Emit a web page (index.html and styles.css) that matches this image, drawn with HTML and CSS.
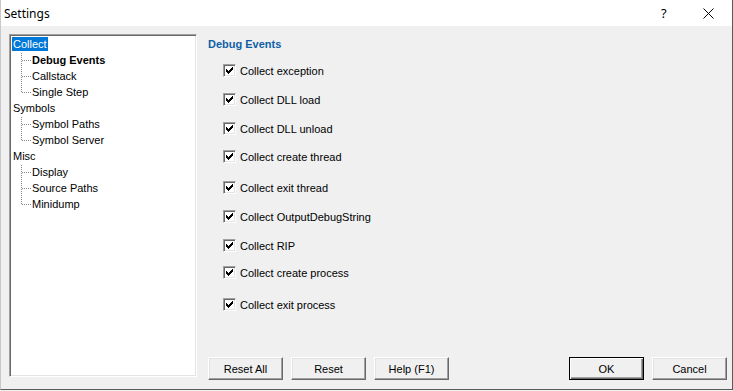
FILE: index.html
```html
<!DOCTYPE html>
<html lang="en">
<head>
<meta charset="UTF-8">
<title>Settings</title>
<link rel="stylesheet" href="styles.css">
</head>
<body>
<div class="window">
    <div class="titlebar">
        <span class="title">Settings</span>
        <span class="help">?</span>
        <span class="close">
            <svg width="11" height="11" viewBox="0 0 11 11"><path d="M0.5 0.5 L10.5 10.5 M10.5 0.5 L0.5 10.5" stroke="#000" stroke-width="1" fill="none"/></svg>
        </span>
    </div>
    <div class="content">
        <div class="tree">
            <div class="node"><span class="label selected">Collect</span></div>
            <div class="children">
                <div class="node child"><span class="label bold">Debug Events</span></div>
                <div class="node child"><span class="label">Callstack</span></div>
                <div class="node child"><span class="label">Single Step</span></div>
            </div>
            <div class="node"><span class="label">Symbols</span></div>
            <div class="children">
                <div class="node child"><span class="label">Symbol Paths</span></div>
                <div class="node child"><span class="label">Symbol Server</span></div>
            </div>
            <div class="node"><span class="label">Misc</span></div>
            <div class="children">
                <div class="node child"><span class="label">Display</span></div>
                <div class="node child"><span class="label">Source Paths</span></div>
                <div class="node child"><span class="label">Minidump</span></div>
            </div>
        </div>
        <div class="pane">
            <div class="heading">Debug Events</div>
            <div class="options">
                <label class="option g1"><span class="check"></span>Collect exception</label>
                <label class="option g16"><span class="check"></span>Collect DLL load</label>
                <label class="option g16"><span class="check"></span>Collect DLL unload</label>
                <label class="option g15"><span class="check"></span>Collect create thread</label>
                <label class="option g18"><span class="check"></span>Collect exit thread</label>
                <label class="option g16"><span class="check"></span>Collect OutputDebugString</label>
                <label class="option g16"><span class="check"></span>Collect RIP</label>
                <label class="option g14"><span class="check"></span>Collect create process</label>
                <label class="option g19"><span class="check"></span>Collect exit process</label>
            </div>
            <div class="buttons">
                <button class="btn">Reset All</button>
                <button class="btn">Reset</button>
                <button class="btn">Help (F1)</button>
                <span class="spacer"></span>
                <button class="btn default">OK</button>
                <button class="btn">Cancel</button>
            </div>
        </div>
    </div>
</div>
</body>
</html>
```

FILE: styles.css
```css
body {
    margin: 0;
    background: #f0f0f0;
    font-family: Tahoma, "Liberation Sans", sans-serif;
    font-size: 11px;
    color: #000;
}
.window {
    width: 733px;
    height: 390px;
    box-sizing: border-box;
    border-left: 1px solid #c8c8c8;
    border-right: 1px solid #5a5a5a;
    border-bottom: 1px solid #5a5a5a;
    background: #f0f0f0;
    display: flex;
    flex-direction: column;
}
.titlebar {
    height: 26px;
    background: #fff;
    display: flex;
    align-items: center;
    flex-shrink: 0;
}
.title {
    font-family: "Noto Sans", sans-serif;
    font-size: 12px;
    padding-left: 3px;
    flex: 1;
}
.help {
    font-family: "Noto Sans", sans-serif;
    font-size: 13px;
    width: 12px;
    margin-right: 30px;
}
.close {
    display: flex;
    margin-right: 18px;
}
.content {
    flex: 1;
    display: flex;
    padding-left: 8px;
    padding-top: 8px;
}
.tree {
    width: 188px;
    height: 343px;
    box-sizing: border-box;
    background: #fff;
    border: 1px solid;
    border-color: #a0a0a0 #fff #fff #a0a0a0;
    box-shadow: inset 1px 1px #696969, inset -1px -1px #e3e3e3;
    padding: 2px 0 0 2px;
}
.node {
    height: 16px;
}
.label {
    display: inline-block;
    line-height: 14px;
    padding: 0 1px;
}
.label.selected {
    background: #0078d7;
    color: #fff;
}
.label.bold {
    font-weight: bold;
}
.children {
    background-image: repeating-linear-gradient(to bottom, #8a8a8a 0 1px, transparent 1px 2px);
    background-size: 1px calc(100% - 9px);
    background-position: 9px 0;
    background-repeat: no-repeat;
}
.child {
    padding-left: 19px;
    background-image: repeating-linear-gradient(to right, #8a8a8a 0 1px, transparent 1px 2px);
    background-size: 9px 1px;
    background-position: 10px 7px;
    background-repeat: no-repeat;
}
.pane {
    flex: 1;
    display: flex;
    flex-direction: column;
    padding-left: 11px;
    padding-right: 5px;
    padding-bottom: 9px;
}
.heading {
    color: #0f5fa6;
    font-weight: bold;
    margin-top: 3px;
    line-height: 14px;
}
.options {
    padding-left: 15px;
}
.option {
    display: flex;
    align-items: center;
    height: 13px;
    gap: 4px;
}
.g1 { margin-top: 13px; }
.g14 { margin-top: 14px; }
.g15 { margin-top: 15px; }
.g16 { margin-top: 16px; }
.g18 { margin-top: 18px; }
.g19 { margin-top: 19px; }
.check {
    width: 13px;
    height: 13px;
    box-sizing: border-box;
    border: 1px solid;
    border-color: #a0a0a0 #fff #fff #a0a0a0;
    box-shadow: inset 1px 1px #696969, inset -1px -1px #e3e3e3;
    background: #fff url("data:image/svg+xml;utf8,<svg xmlns='http://www.w3.org/2000/svg' width='11' height='11' shape-rendering='crispEdges'><path d='M2 4h1v3h-1zM3 5h1v3h-1zM4 6h1v3h-1zM5 5h1v3h-1zM6 4h1v3h-1zM7 3h1v3h-1zM8 2h1v3h-1z' fill='black'/></svg>") no-repeat 0 0;
}
.buttons {
    margin-top: auto;
    display: flex;
    gap: 8px;
}
.spacer {
    flex: 1;
}
.btn {
    width: 75px;
    height: 23px;
    box-sizing: border-box;
    font-family: inherit;
    font-size: 11px;
    color: #000;
    background: #f0f0f0;
    border: 1px solid;
    border-color: #fff #696969 #696969 #fff;
    box-shadow: inset -1px -1px #a0a0a0, inset 1px 1px #e3e3e3;
    padding: 0;
}
.btn.default {
    border-color: #000;
    box-shadow: inset 1px 1px #fff, inset -1px -1px #696969, inset -2px -2px #a0a0a0;
}
```
